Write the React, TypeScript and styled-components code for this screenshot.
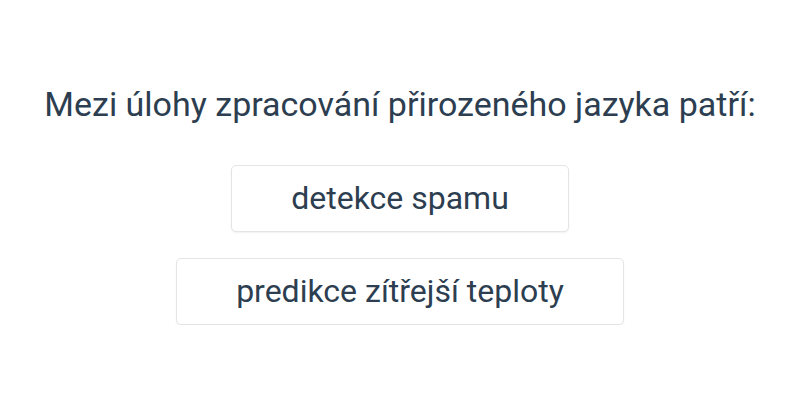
import React from "react";
import styled, { createGlobalStyle } from "styled-components";

const Global = createGlobalStyle`
  html, body { margin: 0; padding: 0; background: #ffffff; }
  body { font-family: Roboto, "Noto Sans", sans-serif; color: #2c3e50; }
`;

const Page = styled.div`
  display: flex;
  flex-direction: column;
  align-items: center;
  padding-top: 84px;
`;

const Question = styled.h1`
  margin: 0 0 41px;
  font-size: 34px;
  font-weight: 400;
  line-height: 40px;
  text-align: center;
  white-space: nowrap;
`;

const Options = styled.div`
  display: flex;
  flex-direction: column;
  align-items: center;
  gap: 26px;
`;

const Option = styled.button`
  font-family: Roboto, "Noto Sans", sans-serif;
  font-size: 32px;
  line-height: 37px;
  color: #2c3e50;
  background: #ffffff;
  border: 1px solid #e4e4e4;
  border-radius: 5px;
  padding: 14px 59px;
  box-shadow: 0 1px 2px rgba(0, 0, 0, 0.06);
  cursor: pointer;
`;

export default function App() {
  const options = ["detekce spamu", "predikce zítřejší teploty"];
  return (
    <>
      <Global />
      <Page>
        <Question>Mezi úlohy zpracování přirozeného jazyka patří:</Question>
        <Options>
          {options.map((o) => (
            <Option key={o}>{o}</Option>
          ))}
        </Options>
      </Page>
    </>
  );
}
